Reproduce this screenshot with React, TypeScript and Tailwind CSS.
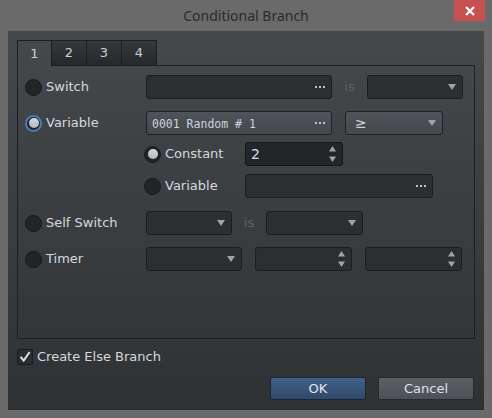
import React from "react";

const ui = "font-['DejaVu_Sans',sans-serif]";

const Arrow = () => (
  <svg width="8" height="6" viewBox="0 0 8 6" className="shrink-0">
    <path d="M0 0H8L4 6Z" fill="#9ea4aa" />
  </svg>
);

const Spin = () => (
  <svg width="7" height="16" viewBox="0 0 7 16" className="shrink-0">
    <path d="M0 5.5H7L3.5 0Z" fill="#9ea4aa" />
    <path d="M0 10.5H7L3.5 16Z" fill="#9ea4aa" />
  </svg>
);

const Dots = () => (
  <div className="flex gap-[2px] shrink-0">
    <span className="w-[2px] h-[2px] bg-[#bfc4c9]" />
    <span className="w-[2px] h-[2px] bg-[#bfc4c9]" />
    <span className="w-[2px] h-[2px] bg-[#bfc4c9]" />
  </div>
);

type Kind = "dim" | "lit" | "input";

const boxStyle: { [key: string]: string } = {
  dim: "bg-[#2c2f32] border-[#1b1d1f]",
  lit: "bg-gradient-to-b from-[#505458] to-[#45494d] border-[#1f2123]",
  input: "bg-[#232629] border-[#141618]",
};

const Box: React.FC<{
  w: string;
  kind?: Kind;
  end?: "arrow" | "spin" | "dots";
  children?: React.ReactNode;
}> = ({ w, kind = "dim", end, children }) => (
  <div
    className={`${w} h-[24px] shrink-0 border rounded-[3px] flex items-center pl-[5px] pr-[6px] ${boxStyle[kind]}`}
  >
    <div className="flex-1 truncate">{children}</div>
    {end === "arrow" && <Arrow />}
    {end === "spin" && <Spin />}
    {end === "dots" && <Dots />}
  </div>
);

const Radio: React.FC<{ on?: boolean; focus?: boolean }> = ({ on, focus }) => (
  <div
    className={`w-[17px] h-[17px] rounded-full shrink-0 grid place-items-center bg-[#222528] ${
      focus ? "border-2 border-[#4a7db6]" : "border border-[#17191b]"
    }`}
  >
    {on && (
      <div className="w-[10px] h-[10px] rounded-full bg-gradient-to-b from-[#d6d8da] to-[#b4b7ba]" />
    )}
  </div>
);

const Option: React.FC<{ label: string; w: string; on?: boolean; focus?: boolean }> = ({
  label,
  w,
  on,
  focus,
}) => (
  <div className={`${w} shrink-0 flex items-center gap-[4px]`}>
    <Radio on={on} focus={focus} />
    <span className="text-[13px] text-[#d3d9df]">{label}</span>
  </div>
);

const Is: React.FC<{ w: string }> = ({ w }) => (
  <span className={`${w} shrink-0 text-center text-[13px] text-[#5d6165]`}>is</span>
);

export default function App() {
  return (
    <div className={`w-[492px] h-[418px] bg-[#6a6a6a] flex flex-col ${ui}`}>
      {/* title bar */}
      <div className="h-[31px] grid grid-cols-[1fr_auto_1fr] items-start">
        <div />
        <div className="h-[31px] flex items-center font-['Noto_Sans',sans-serif] text-[14px] text-[#2b2b2b]">
          Conditional Branch
        </div>
        <div className="flex justify-end pr-[7px]">
          <div className="w-[31px] h-[21px] bg-[#c75050] grid place-items-center">
            <svg width="10" height="10" viewBox="0 0 10 10">
              <path d="M1 1L9 9M9 1L1 9" stroke="#ffffff" strokeWidth="2.2" />
            </svg>
          </div>
        </div>
      </div>

      {/* dialog body */}
      <div className="flex-1 mx-[8px] mb-[8px] bg-gradient-to-b from-[#46494c] to-[#2f3235] flex flex-col pt-[9px] px-[9px] pb-[10px]">
        <div className="flex h-[26px] text-[13px] text-[#c9d0d7]">
          <div className="w-[35px] border-l border-t border-r border-[#1c1e21] grid place-items-center">
            1
          </div>
          {["2", "3", "4"].map((t) => (
            <div
              key={t}
              className="w-[35px] border-t border-r border-b border-[#1c1e21] bg-gradient-to-b from-[#36393c] to-[#26292c] grid place-items-center"
            >
              {t}
            </div>
          ))}
          <div className="flex-1 border-b border-[#1c1e21]" />
        </div>

        <div className="h-[273px] border-l border-r border-b border-[#1c1e21] pt-[9px] pl-[7px] flex flex-col">
          <div className="flex items-center">
            <Option label="Switch" w="w-[121px]" />
            <Box w="w-[186px]" end="dots" />
            <Is w="w-[35px]" />
            <Box w="w-[96px]" end="arrow" />
          </div>

          <div className="flex items-center mt-[12px]">
            <Option label="Variable" w="w-[121px]" on focus />
            <Box w="w-[186px]" kind="lit" end="dots">
              <span className="font-['DejaVu_Sans_Mono',monospace] text-[11.5px] text-[#c9d3dd]">
                0001 Random # 1
              </span>
            </Box>
            <div className="w-[13px] shrink-0" />
            <Box w="w-[98px]" kind="lit" end="arrow">
              <span className="text-[14px] text-[#c9d0d7] pl-[4px]">≥</span>
            </Box>
          </div>

          <div className="flex items-center mt-[7px] ml-[119px]">
            <Option label="Constant" w="w-[101px]" on />
            <Box w="w-[98px]" kind="input" end="spin">
              <span className="text-[14px] text-[#d8dde2]">2</span>
            </Box>
          </div>

          <div className="flex items-center mt-[8px] ml-[119px]">
            <Option label="Variable" w="w-[101px]" />
            <Box w="w-[188px]" end="dots" />
          </div>

          <div className="flex items-center mt-[13px]">
            <Option label="Self Switch" w="w-[121px]" />
            <Box w="w-[86px]" end="arrow" />
            <Is w="w-[34px]" />
            <Box w="w-[97px]" end="arrow" />
          </div>

          <div className="flex items-center mt-[12px] gap-[13px]">
            <Option label="Timer" w="w-[108px]" />
            <Box w="w-[96px]" end="arrow" />
            <Box w="w-[97px]" end="spin" />
            <Box w="w-[97px]" end="spin" />
          </div>
        </div>

        <div className="mt-[10px] h-[16px] flex items-center gap-[4px]">
          <div className="w-[16px] h-[16px] rounded-[2px] border border-[#1a1c1e] bg-[#2a2d30] grid place-items-center">
            <svg width="12" height="12" viewBox="0 0 12 12">
              <path d="M0.8 6.4L2.6 5.2L4.6 8L9.8 0.6L11.4 1.6L4.8 11.2Z" fill="#dde2e7" />
            </svg>
          </div>
          <span className="text-[13px] text-[#d3d9df]">Create Else Branch</span>
        </div>

        <div className="mt-[12px] flex justify-end gap-[12px] pr-[1px]">
          <button className="w-[96px] h-[23px] rounded-[2px] border border-[#1b2431] bg-gradient-to-b from-[#41618a] to-[#2e4868] text-[13px] text-[#e1e6eb]">
            OK
          </button>
          <button className="w-[96px] h-[23px] rounded-[2px] border border-[#27292b] bg-gradient-to-b from-[#5c6064] to-[#4d5155] text-[13px] text-[#dde2e7]">
            Cancel
          </button>
        </div>
      </div>
    </div>
  );
}
